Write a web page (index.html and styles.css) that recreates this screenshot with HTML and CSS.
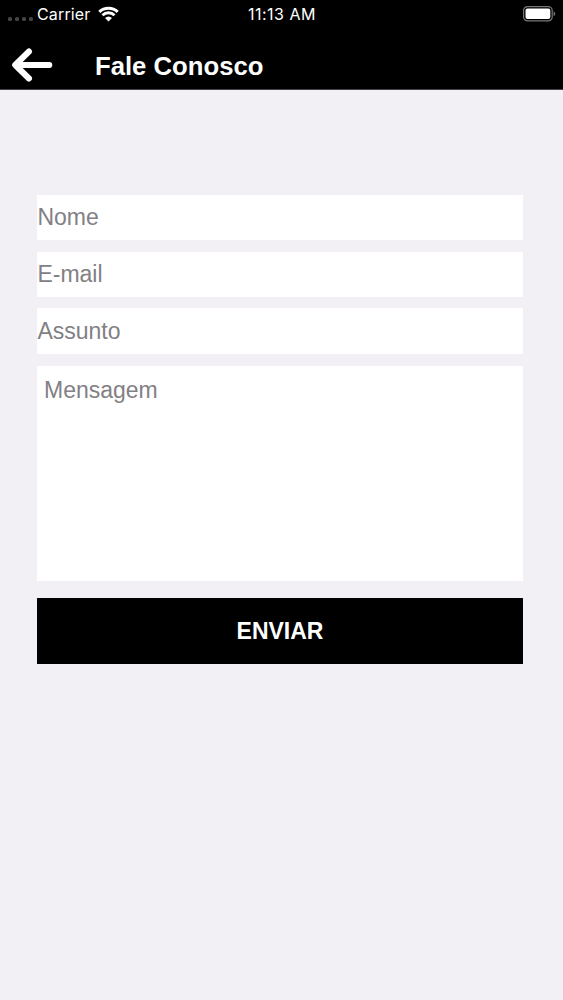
FILE: index.html
```html
<!DOCTYPE html>
<html lang="pt-BR">
    <head>
        <meta charset="utf-8">
        <meta name="viewport" content="width=device-width, initial-scale=1.0">
        <title>Fale Conosco</title>
        <link rel="stylesheet" href="styles.css">
    </head>
    <body>
        <header class="topbar">
            <div class="status">
                <div class="carrier">
                    <span class="dots"><i></i><i></i><i></i><i></i></span>
                    <span>Carrier</span>
                    <svg class="wifi" viewBox="0 0 21 16" width="21" height="16">
                        <path d="M1.300 5.900a13.200 13.200 0 0 1 18.400 0M4.500 9.200a8.600 8.600 0 0 1 12 0" fill="none" stroke="#fff" stroke-width="3"/>
                        <path d="M7 12a5.200 5.200 0 0 1 7 0L10.500 15.600z" fill="#fff"/>
                    </svg>
                </div>
                <div class="time">11:13 AM</div>
                <svg class="battery" viewBox="0 0 33 16" width="33" height="16">
                    <rect x=".6" y=".6" width="28.600" height="14.300" rx="4" fill="none" stroke="#777" stroke-width="1.200"/>
                    <rect x="2.500" y="2.500" width="24.800" height="10.500" rx="2" fill="#fff"/>
                    <path d="M30.600 5.300q1.700 1 1.700 2.500t-1.700 2.500z" fill="#777"/>
                </svg>
            </div>
            <div class="nav">
                <a class="back" href="#" aria-label="Voltar">
                    <svg viewBox="0 0 42 34" width="42" height="34">
                        <path d="M38.300 17H6M18 3.500L4.200 17L18 30.500" fill="none" stroke="#fff" stroke-width="6" stroke-linecap="round" stroke-linejoin="round"/>
                    </svg>
                </a>
                <h1>Fale Conosco</h1>
            </div>
        </header>
        <form class="contact">
            <input type="text" placeholder="Nome">
            <input type="text" placeholder="E-mail">
            <input type="text" placeholder="Assunto">
            <textarea placeholder="Mensagem"></textarea>
            <button type="button">ENVIAR</button>
        </form>
    </body>
</html>
```
FILE: styles.css
```css
* {
    box-sizing: border-box;
}
body {
    margin: 0;
    min-height: 100vh;
    background-color: #f2f0f4;
    font-family: "Liberation Sans", Arial, sans-serif;
}
.topbar {
    height: 90px;
    background-color: #000;
    border-bottom: 1px solid #454347;
    color: #fff;
}
.status {
    display: grid;
    grid-template-columns: 1fr auto 1fr;
    align-items: center;
    height: 28px;
    padding: 0 7px 0 8px;
    font-family: Inter, sans-serif;
    font-size: 16px;
    line-height: 27px;
}
.carrier {
    display: flex;
    align-items: center;
    letter-spacing: 0.15px;
}
.time {
    letter-spacing: 0.5px;
}
.dots {
    display: flex;
    gap: 3px;
    margin: 9px 4px 0 0;
}
.dots i {
    width: 4px;
    height: 4px;
    border-radius: 1.5px;
    background-color: #454545;
}
.wifi {
    margin: -1px 0 0 7px;
}
.battery {
    justify-self: end;
    margin-top: -1px;
}
.nav {
    display: flex;
    align-items: center;
    height: 61px;
    padding: 13px 0 0 11px;
}
.back {
    display: flex;
}
.nav h1 {
    margin: 1px 0 0 42px;
    font-size: 25.7px;
    line-height: 30px;
}
.contact {
    display: flex;
    flex-direction: column;
    width: 486px;
    margin: 105px 0 0 37px;
}
input,
textarea {
    display: block;
    margin: 0 0 12px;
    border: 0;
    border-radius: 0;
    padding: 0 0 0 0.4px;
    background-color: #fff;
    font-family: inherit;
    font-size: 23px;
    resize: none;
}
input {
    height: 45px;
}
input:nth-child(2) {
    margin-bottom: 11px;
}
input:nth-child(3) {
    height: 46px;
}
textarea {
    height: 215px;
    margin-bottom: 17px;
    padding: 11px 7px;
}
input::placeholder,
textarea::placeholder {
    color: #828085;
}
button {
    height: 66px;
    border: 0;
    background-color: #000;
    color: #fff;
    font-family: inherit;
    font-size: 23px;
    font-weight: bold;
}
```
